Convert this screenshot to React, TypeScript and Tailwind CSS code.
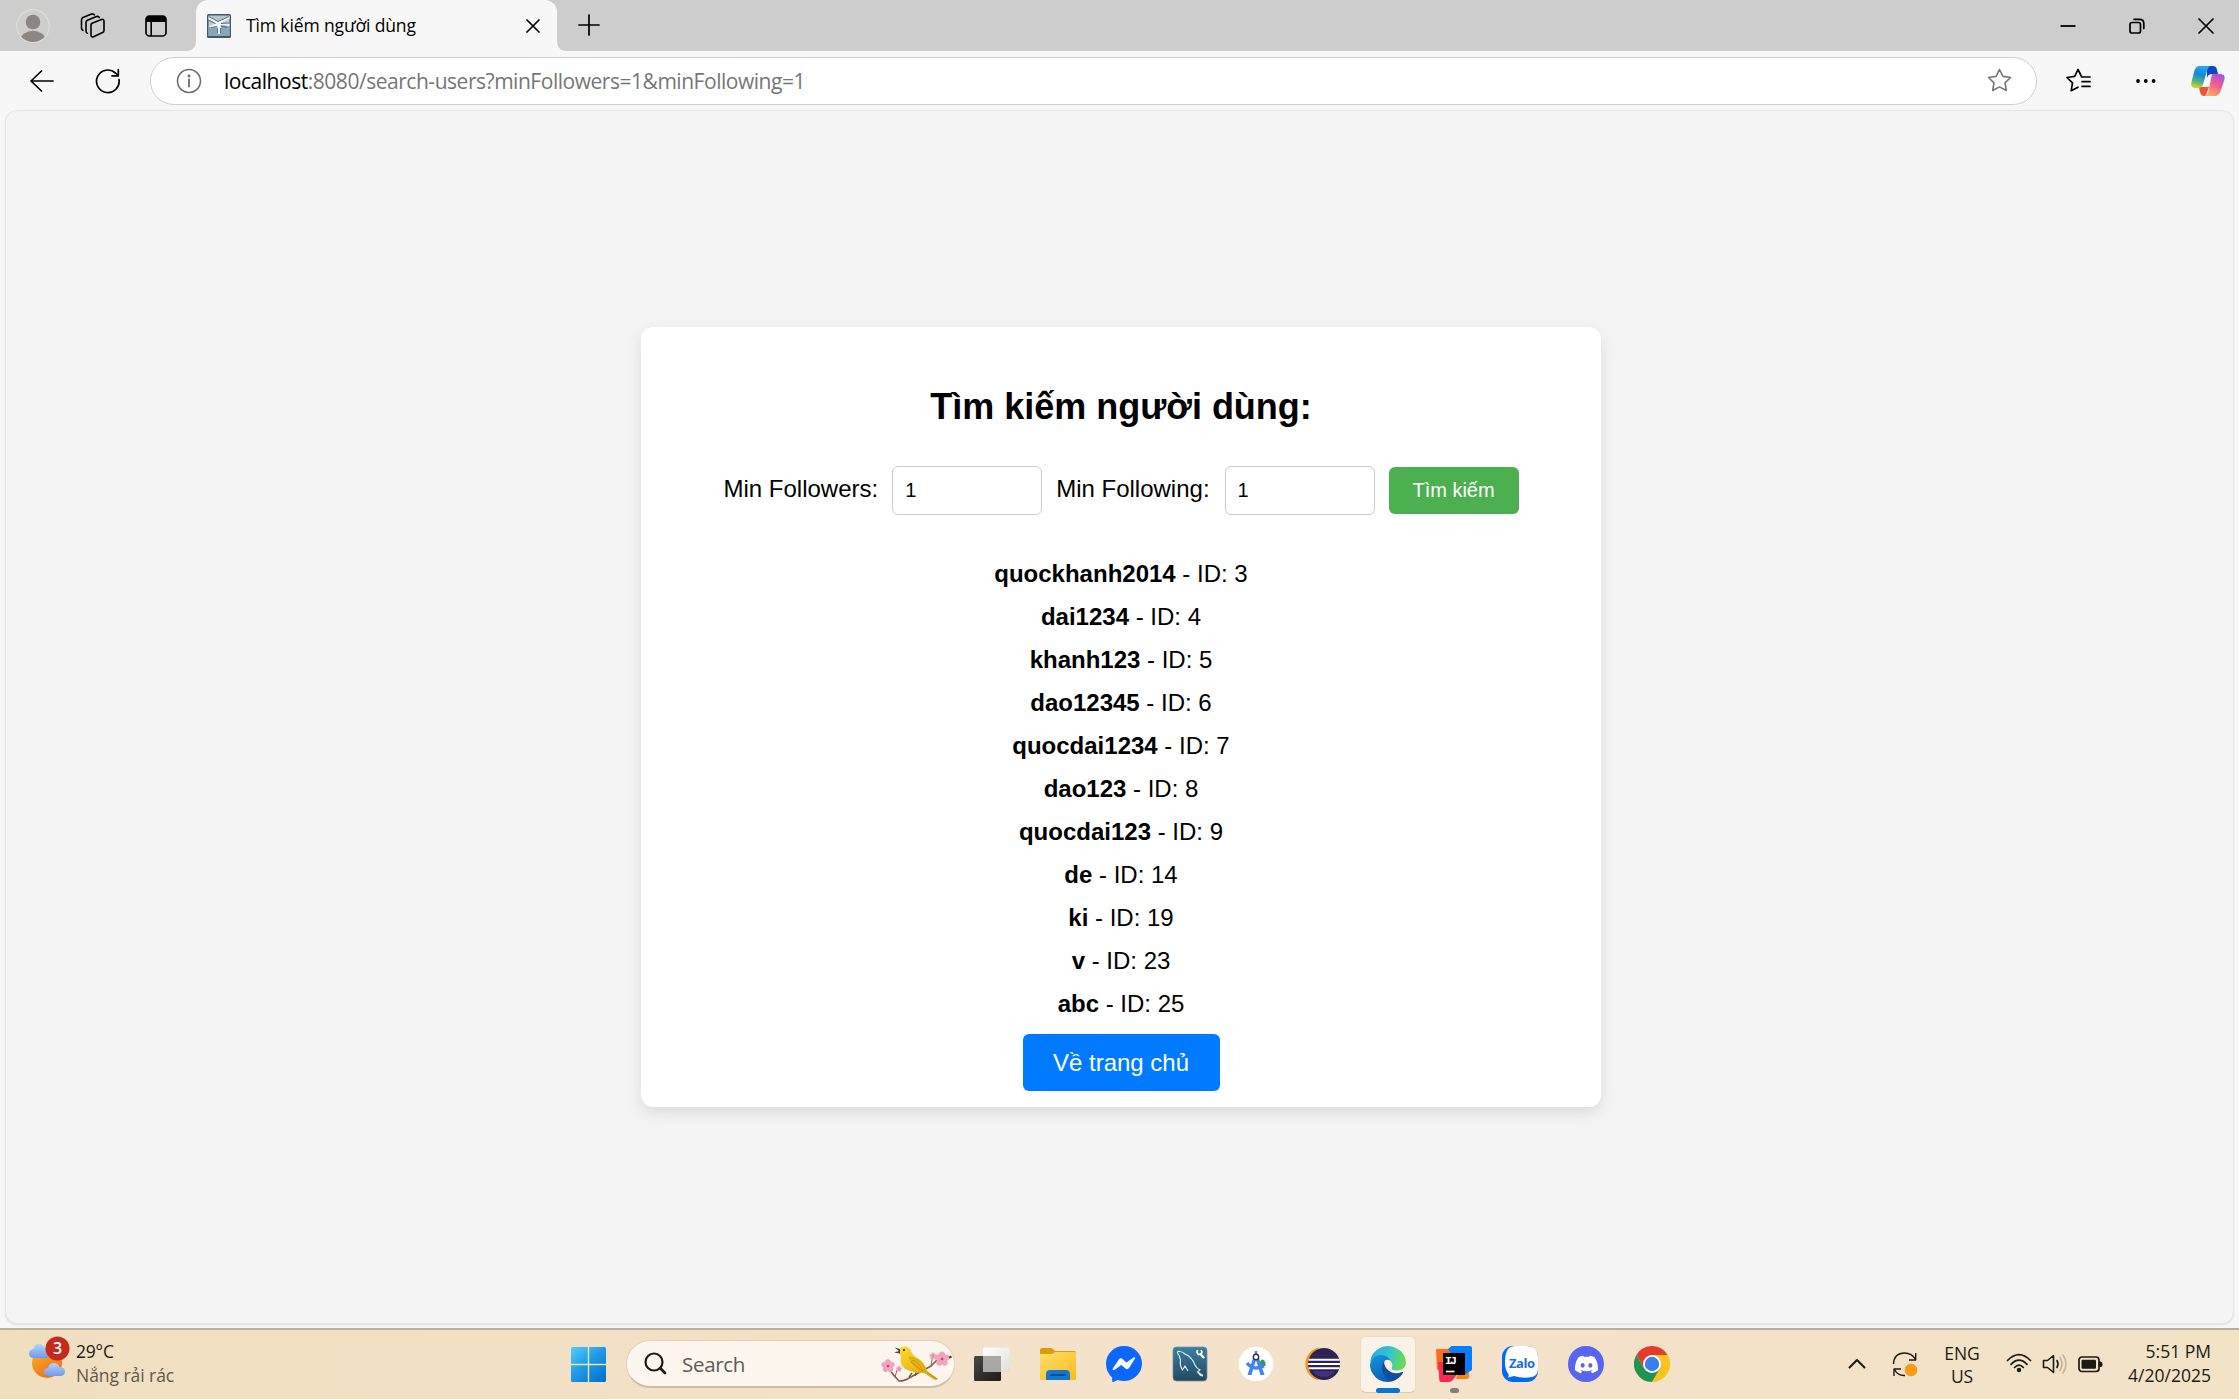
import React from "react";
import { SiDiscord } from "react-icons/si";

const users = [
  { name: "quockhanh2014", id: 3 },
  { name: "dai1234", id: 4 },
  { name: "khanh123", id: 5 },
  { name: "dao12345", id: 6 },
  { name: "quocdai1234", id: 7 },
  { name: "dao123", id: 8 },
  { name: "quocdai123", id: 9 },
  { name: "de", id: 14 },
  { name: "ki", id: 19 },
  { name: "v", id: 23 },
  { name: "abc", id: 25 },
];

const line = { fill: "none", stroke: "currentColor", strokeLinecap: "round", strokeLinejoin: "round" } as const;

function TabStrip() {
  return (
    <div className="flex h-[51px] shrink-0 bg-[#cdcdcd]">
      <div className="flex w-[186px] items-center pl-4">
        <svg className="h-[34px] w-[34px]" viewBox="0 0 34 34">
          <defs><clipPath id="av"><circle cx="17" cy="17" r="16" /></clipPath></defs>
          <circle cx="17" cy="17" r="16.3" fill="#d0cecb" stroke="#dedcd9" strokeWidth="1.2" />
          <g clipPath="url(#av)" fill="#8b8683">
            <circle cx="17" cy="13" r="7.3" />
            <ellipse cx="17" cy="31" rx="12.5" ry="9.3" />
          </g>
        </svg>
        <svg className="ml-[30px] h-[26px] w-[26px]" viewBox="0 0 26 26" strokeWidth="1.6" {...line}>
          <path d="M12 10.2 21.5 6.6Q24 5.800 24 8.300V17.500Q24 19 22.600 19.600L13.500 23.700Q11 24.500 11 22V12Q11 10.700 12 10.200Z" />
          <path d="M7.400 20.300Q6 20 6 18V9.500Q6 8 7.400 7.300L16.500 3.600Q18.500 3 19.300 4.500" />
          <path d="M2.800 17.300Q1.500 16.500 1.500 15V7Q1.500 5.300 3 4.500L11.500 1.100Q13.500 .600 14.300 1.800" />
        </svg>
        <svg className="ml-[39px] h-[22px] w-[22px]" viewBox="0 0 22 22">
          <rect x="1" y="1" width="20" height="20" rx="3.500" fill="none" stroke="#000" strokeWidth="1.700" />
          <path d="M1 7V4Q1 1 4 1H18Q21 1 21 4V7Z" />
          <path d="M6.200 7V21" stroke="#000" strokeWidth="1.600" />
        </svg>
      </div>
      <svg className="h-[51px] w-[10px]" viewBox="0 0 10 51"><path d="M0 51Q10 51 10 40V51Z" fill="#f7f7f7" /></svg>
      <div className="flex w-[361px] items-center rounded-t-[12px] bg-[#f7f7f7] pl-[11px]">
        <svg className="h-6 w-6" viewBox="0 0 24 24">
          <rect width="24" height="24" rx="1.500" fill="#44586c" />
          <rect x="1.500" y="1.500" width="21" height="20.500" fill="#b3c6d2" />
          <path d="M1.500 12Q8 15 13 12T22.500 12V22H1.500Z" fill="#88a7b8" />
          <path d="M1.500 2 11 7.500 22.500 2V5L14 9 22.500 9.500V12L13.500 11 14 13 13 20 10 20 10.500 12.500 4 13.500 1.500 12 9 9.500 1.500 5.500Z" fill="#f1f5f7" />
          <path d="M1.500 2.500 11 7.500 22 2.500M1.500 6 8.500 9.500M14 9.500 22.500 9M4 13.500 10 12.500M14 12 20 13.500M10.500 14V19.500M13.500 14V19" fill="none" stroke="#4c6377" strokeWidth=".9" />
        </svg>
        <span className="-mt-px ml-[15px] w-[172px] whitespace-nowrap text-[17.500px] leading-6 tracking-[-0.120px]">Tìm kiếm người dùng</span>
        <svg className="ml-[108px] h-[14px] w-[14px]" viewBox="0 0 14 14" strokeWidth="1.700" {...line}><path d="M1 1 13 13M13 1 1 13" /></svg>
      </div>
      <svg className="h-[51px] w-[10px]" viewBox="0 0 10 51"><path d="M10 51Q0 51 0 40V51Z" fill="#f7f7f7" /></svg>
      <svg className="mt-[14px] ml-[11px] h-[22px] w-[22px]" viewBox="0 0 22 22" strokeWidth="1.700" {...line}><path d="M11 1V21M1 11H21" /></svg>
      <div className="ml-auto flex items-center pr-[25px]">
        <svg className="h-4 w-4" viewBox="0 0 16 16"><path d="M.500 8H15.500" stroke="#000" strokeWidth="1.800" /></svg>
        <svg className="ml-[53px] h-4 w-4" viewBox="0 0 16 16" strokeWidth="1.700" {...line}>
          <rect x="1" y="4.500" width="10.500" height="10.500" rx="2" /><path d="M5 1.300H10.500Q14.800 1.300 14.800 5.500V10.500" />
        </svg>
        <svg className="ml-[53px] h-4 w-4" viewBox="0 0 16 16" strokeWidth="1.700" {...line}><path d="M1 1 15 15M15 1 1 15" /></svg>
      </div>
    </div>
  );
}

function Toolbar() {
  return (
    <div className="flex h-[59px] shrink-0 items-center bg-[#f7f7f7] pl-[30px]">
      <svg className="h-6 w-6" viewBox="0 0 24 24" strokeWidth="1.700" {...line}><path d="M23 12H1M11.500 2 1 12 11.500 22" /></svg>
      <svg className="ml-[41px] h-[26px] w-[26px]" viewBox="0 0 26 26" strokeWidth="1.700" {...line}>
        <path d="M24 11.500A11.300 11.300 0 1 1 20.500 5L23 7.500M23.300 1.500V7.800H17" />
      </svg>
      <div className="ml-[29px] flex h-[48px] w-[1887px] items-center rounded-full border-[1.500px] border-[#d0d0d0] bg-white pl-[25px]">
        <svg className="h-[26px] w-[26px] text-[#6b6b6b]" viewBox="0 0 26 26" strokeWidth="1.500" {...line}>
          <circle cx="13" cy="13" r="11.500" /><path d="M13 11.500V18.500" strokeWidth="1.800" /><circle cx="13" cy="8" r=".7" fill="currentColor" />
        </svg>
        <span className="ml-[22px] whitespace-nowrap text-[21px] leading-7 tracking-[-0.470px] text-[#767676]"><span className="text-black">localhost</span>:8080/search-users?minFollowers=1&amp;minFollowing=1</span>
        <svg className="mr-[24px] ml-auto h-[25px] w-[25px] text-[#767676]" viewBox="0 0 25 25" strokeWidth="1.600" {...line}>
          <path d="M12.500 1.500 15.900 8.400 23.500 9.500 18 14.900 19.300 22.500 12.500 18.900 5.700 22.500 7 14.900 1.500 9.500 9.100 8.400Z" />
        </svg>
      </div>
      <svg className="ml-[29px] h-[25px] w-[25px]" viewBox="0 0 25 25" strokeWidth="1.700" {...line}>
        <path d="M16.500 9H15.700L12 1.500 8.700 8.400 1 9.500 6.500 14.900 5.200 22.700 12 19.200M16.500 9H24M16 13.700H24M16 18.400H24" />
      </svg>
      <svg className="ml-[44px] h-[6px] w-[22px]" viewBox="0 0 22 6"><circle cx="3" cy="3" r="1.900" /><circle cx="10.800" cy="3" r="1.900" /><circle cx="18.600" cy="3" r="1.900" /></svg>
      <svg className="ml-[33px] h-[34px] w-[36px]" viewBox="0 0 36 34">
        <defs>
          <linearGradient id="cpa" x1=".4" y1="0" x2=".2" y2="1"><stop offset="0" stopColor="#20a8f0" /><stop offset=".35" stopColor="#1787dc" /><stop offset=".7" stopColor="#4fb67b" /><stop offset="1" stopColor="#f8cf20" /></linearGradient>
          <linearGradient id="cpb" x1=".8" y1="0" x2=".3" y2="1"><stop offset="0" stopColor="#a350e8" /><stop offset=".5" stopColor="#f0608c" /><stop offset="1" stopColor="#ffac5c" /></linearGradient>
        </defs>
        <path d="M17 2H23Q26 2 26.800 5L28 10H22Q18 10 17 14Z" fill="#0c49c3" />
        <path d="M9 23H19L16 31Q15.500 32 14 32 11 32 10 28Z" fill="#f4503c" />
        <path d="M9 2H20Q18 3 17 7L13.500 19Q12.400 24 8 24H5Q0 24 1.500 18L4 8Q5.500 2 9 2Z" fill="url(#cpa)" />
        <path d="M22 10H30Q36 10 34.300 16L31 26Q29 32 25 32H15Q17.500 31 18.500 27Z" fill="url(#cpb)" />
        <path d="M21.500 11Q18.500 11 17.800 13.500L15 22.500H15.500Q18 22.500 18.800 20Z" fill="#fff" />
      </svg>
    </div>
  );
}

function NumberBox() {
  return <input type="text" defaultValue="1" className="h-[49px] w-[150px] rounded-[6px] border border-[#ccc] bg-white px-3 text-[20px] leading-6 outline-none" />;
}

function SearchPage() {
  return (
    <div className="flex grow flex-col bg-[#f7f7f7] px-[5px] pb-[4px]">
      <main className="flex grow items-start justify-center rounded-[12px] border border-[#e6e6e6] bg-[#f4f4f4] pt-[216px] pl-[3px] font-['Liberation_Sans',Arial,sans-serif] text-[24px] leading-[28px] shadow-[0_1px_2px_rgba(0,0,0,0.100)]">
        <section className="flex h-[780px] w-[960px] flex-col items-center rounded-[12px] bg-white pt-[60px] shadow-[0_6px_15px_rgba(0,0,0,0.100)]">
          <h2 className="text-[36px] leading-[40px] font-bold">Tìm kiếm người dùng:</h2>
          <form className="mt-[39px] flex items-center" onSubmit={(e) => e.preventDefault()}>
            <label className="mr-[14px] -mt-[4px]">Min Followers:</label>
            <NumberBox />
            <label className="mr-[15px] ml-[14px] -mt-[4px]">Min Following:</label>
            <NumberBox />
            <button className="ml-[14px] h-[47px] w-[130px] rounded-[6px] bg-[#4caf50] pb-[2px] text-[20px] leading-6 text-white">Tìm kiếm</button>
          </form>
          <ul className="mt-[38px] flex flex-col items-center">
            {users.map((u) => (
              <li key={u.id} className="h-[43px] pt-[7px]"><b>{u.name}</b> - ID: {u.id}</li>
            ))}
          </ul>
          <button className="mt-[8px] h-[57px] w-[197px] rounded-[6px] bg-[#007bff] text-white">Về trang chủ</button>
        </section>
      </main>
    </div>
  );
}

function Weather() {
  return (
    <svg className="h-[44px] w-[44px]" viewBox="0 0 44 44">
      <defs>
        <linearGradient id="sun" x1="0" y1="0" x2=".6" y2="1"><stop offset="0" stopColor="#f8b42a" /><stop offset="1" stopColor="#f0701c" /></linearGradient>
        <linearGradient id="cl" x1="0" y1="0" x2="0" y2="1"><stop offset="0" stopColor="#b5d2f8" /><stop offset="1" stopColor="#6e9bea" /></linearGradient>
      </defs>
      <circle cx="19" cy="27" r="15" fill="url(#sun)" />
      <path d="M6.500 22Q1 22 1 17.500 1 13.500 5.500 13 6 8 11 8 15.500 8 17 12 23 12 23 17 23 22 18 22Z" fill="url(#cl)" />
      <path d="M21 40Q16 40 16 36 16 32.500 20 32 21 27 26 27 30 27 31.500 31 37 31 37 35.500 37 40 32 40Z" fill="url(#cl)" />
      <circle cx="29.500" cy="12.500" r="12" fill="#c42b1c" />
      <text x="29.500" y="18.300" textAnchor="middle" fontSize="16" fontWeight="600" fill="#fff" fontFamily="Open Sans">3</text>
    </svg>
  );
}

function Blossom({ x, y, s }: { x: number; y: number; s: number }) {
  return (
    <g transform={`translate(${x} ${y}) scale(${s})`}>
      {[0, 72, 144, 216, 288].map((a) => <ellipse key={a} cx="0" cy="-3.600" rx="2.900" ry="3.400" fill="#f3a5bd" stroke="#ea93b0" strokeWidth=".3" transform={`rotate(${a})`} />)}
      <circle r="1.300" fill="#cf3c68" />
    </g>
  );
}

function Bird() {
  return (
    <svg className="h-[38px] w-[72px]" viewBox="0 0 72 38">
      <defs><linearGradient id="bd" x1="0" y1="0" x2="1" y2="1"><stop offset="0" stopColor="#fbdc2c" /><stop offset="1" stopColor="#e09a0c" /></linearGradient></defs>
      <path d="M8 24Q13 31 18 36 24 36 29 32.500L50 21 56 15 70 12" fill="none" stroke="#8e5a44" strokeWidth="1.600" />
      <path d="M14 32 16 25M50 20 52 10" stroke="#8e5a44" strokeWidth=".9" />
      <path d="M66 13.500 70.500 11.500" stroke="#4d3a28" strokeWidth="2.200" />
      <path d="M18 8Q17 2 23 1.500 29 1 30.500 7 32 11 38 14 44 18 46 26L57 34 54 35 43 28Q32 28 24 24 18 19 20 12Z" fill="url(#bd)" />
      <path d="M28 12Q37 13 41 19 44 24 44 27 33 24 28 12" fill="#eab313" stroke="#b98a10" strokeWidth=".4" />
      <path d="M31 15Q38 17 42 26M30 17Q35 20 41 26M46 27 56 34" fill="none" stroke="#9a7410" strokeWidth=".5" />
      <path d="M19 4 13.500 2.500 18 6 13 7.500 19 8.500Z" fill="#4b4740" />
      <circle cx="23" cy="5" r="1.100" fill="#222" />
      <path d="M31 28 28 32M35 27.500 34 31" stroke="#7b5528" strokeWidth="1.300" />
      <Blossom x={7} y={21} s={0.95} /><Blossom x={61} y={14} s={1.05} /><Blossom x={18} y={24} s={0.42} /><Blossom x={52} y={11} s={0.5} />
    </svg>
  );
}

const box = "h-9 w-9 shrink-0";

function TaskView() {
  return (
    <svg className={box} viewBox="0 0 36 36">
      <defs><linearGradient id="tv" x1="0" y1="0" x2="1" y2="1"><stop offset="0" stopColor="#4a4845" /><stop offset="1" stopColor="#1d1b19" /></linearGradient><linearGradient id="tw" x1="0" y1="0" x2="1" y2="1"><stop offset="0" stopColor="#fff" /><stop offset="1" stopColor="#dedede" /></linearGradient></defs>
      <rect y="10" width="27" height="25" rx="1.500" fill="url(#tv)" />
      <rect x="9" y="1.500" width="27" height="24.500" rx="1.500" fill="url(#tw)" />
      <path d="M9 10H27V26H10.500Q9 26 9 24.500Z" fill="#aaa7a4" />
    </svg>
  );
}

function Folder() {
  return (
    <svg className={box} viewBox="0 0 36 36">
      <defs><linearGradient id="fo" x1="0" y1="0" x2="1" y2="1"><stop offset="0" stopColor="#ffdd6b" /><stop offset="1" stopColor="#fbbd1c" /></linearGradient></defs>
      <path d="M0 4Q0 2 2 2H10.500Q12 2 13 3L15 5H34.500Q36 5 36 7V15H0Z" fill="#dc9c0c" />
      <path d="M0 8H11Q13 8 15 6H34.500Q36 6 36 7.500V32.500Q36 34 34.500 34H1.500Q0 34 0 32.500Z" fill="url(#fo)" />
      <path d="M6 34V28Q6 24 10 24H26Q30 24 30 28V34Z" fill="#1079cf" />
      <path d="M11 29H25" stroke="#0a4b8c" strokeWidth="1.800" strokeLinecap="round" />
    </svg>
  );
}

function Messenger() {
  return (
    <svg className={box} viewBox="0 0 36 36">
      <path d="M18 0A18 17.500 0 0 1 36 17.500 18 17.500 0 0 1 18 35Q14.500 35 11.500 34L7.500 35.900Q6.300 36.200 6.200 35L6.100 31.500Q0 26 0 17.500A18 17.500 0 0 1 18 0Z" fill="#0a68ff" />
      <path d="M6.500 23 13 13.200Q14.500 11.500 16.300 12.700L20.500 16.500 27.500 11.500Q29.500 10.700 29 12.500L23 22Q21.500 24 19.500 22.500L15.200 19 8 24.200Q6.500 24.700 6.500 23Z" fill="#fff" />
    </svg>
  );
}

function Workbench() {
  return (
    <svg className={box} viewBox="0 0 36 36">
      <defs><linearGradient id="wb" x1="0" y1="0" x2="0" y2="1"><stop offset="0" stopColor="#3b7ea6" /><stop offset="1" stopColor="#22495f" /></linearGradient></defs>
      <rect x="1" y="1" width="34" height="34" rx="3.500" fill="url(#wb)" stroke="#7793a0" strokeWidth=".8" />
      <path d="M5.500 7Q5 4.800 8 5.500 10 5.500 13 8 20 11 23 19 24.500 22.500 28 24L25.500 26 31 29.500M5.500 7Q8 10 8.500 14 7.500 19 10.500 24L13 20 16 25M25.500 26 28.500 29.500 31 30" fill="none" stroke="#e8f1f5" strokeWidth="1.100" />
      <path d="M28 7.500 32 12" fill="none" stroke="#fff" strokeWidth="2.200" />
      <path d="M25.500 4 25 6.500 26.500 8.500 29 8 30 6 29 4" fill="none" stroke="#fff" strokeWidth="1.600" />
    </svg>
  );
}

function AndroidStudio() {
  return (
    <svg className={box} viewBox="0 0 36 36">
      <circle cx="18" cy="18" r="16" fill="#fff" stroke="#fff" strokeWidth="2.500" strokeDasharray="6 2.400" strokeLinecap="round" />
      <path d="M22 17Q22 13.500 25 13.500 28 15 27.500 20H22Z" fill="#30a04c" />
      <path d="M16 9H20L26.500 29H22.500L18 14 13.500 29H9.500Z" fill="#4284f4" />
      <path d="M9 17Q15 25 26 20" fill="none" stroke="#4284f4" strokeWidth="3.400" />
      <path d="M18 5V8" stroke="#4284f4" strokeWidth="2.500" />
      <circle cx="18" cy="11" r="2.700" fill="#fff" stroke="#30353a" strokeWidth="1.400" />
    </svg>
  );
}

function Eclipse() {
  return (
    <svg className={box} viewBox="0 0 36 36">
      <path d="M16 1.500A16.500 16.500 0 0 0 16 34.300 19 19 0 0 1 16 1.500Z" fill="#f7941e" />
      <circle cx="20" cy="18" r="16" fill="#2c2255" />
      <path d="M9 25H31Q27 31 20 31 13 31 9 25Z" fill="#413181" />
      <path d="M4.500 13.700H35.500M4 18H36M4.500 22.300H35.500" stroke="#fff" strokeWidth="1.900" />
    </svg>
  );
}

function Edge() {
  return (
    <svg className={box} viewBox="0 0 36 36">
      <defs>
        <linearGradient id="e1" x1="0" y1=".3" x2="1" y2=".5"><stop offset="0" stopColor="#28a8e0" /><stop offset=".5" stopColor="#33c3d0" /><stop offset="1" stopColor="#6ade4e" /></linearGradient>
        <linearGradient id="e2" x1="0" y1="0" x2=".5" y2="1"><stop offset="0" stopColor="#1494df" /><stop offset="1" stopColor="#0d5cb5" /></linearGradient>
      </defs>
      <path d="M0 17Q1 6 10 2 18-2 26 2 36 7 36 17 35.500 24 28 24.500 21 24.700 21.500 22 23.500 19 21 16 18 12 12 11 4 10 0 17Z" fill="url(#e1)" />
      <path d="M0 18Q3 9 11 9 18 9.500 20.500 15 16 13 14 17 12 24 19 29 25 31 31 28 26 36 18 36 8 36 3 28 0 24 0 18Z" fill="url(#e2)" />
      <path d="M14.500 15Q11 19 12 24 14 32 22 35 29 33.500 33 27 33.500 25.500 32 26 25 29 19 25 14 21 14.500 15Z" fill="#124f9e" />
      <path d="M14.500 15Q17 13 20 14.500 22.500 17 22 20 20.500 22.500 22 23.700 18.500 24 16 21 13.500 18 14.500 15Z" fill="#faf2e8" />
    </svg>
  );
}

function Idea() {
  return (
    <svg className={box} viewBox="0 0 36 36">
      <path d="M0 3H14V15L9 30 1 23Z" fill="#fb6d22" />
      <path d="M22 26H33V31Q33 33 31 33H20Z" fill="#fc8012" />
      <path d="M2 16H14L22 27 17 34Q15.500 36 13 36H5Q3.500 36 3.300 34Z" fill="#fe2857" />
      <path d="M12 3 15.500 0H34Q36 0 36 2V24L28 29Z" fill="#087cfa" />
      <rect x="7" y="7" width="22" height="22" />
      <text x="9" y="18" fontSize="11.500" fontWeight="700" fill="#fff" fontFamily="Liberation Mono" textLength="12">IJ</text>
      <path d="M10 25.500H18.500" stroke="#fff" strokeWidth="1.700" />
    </svg>
  );
}

function Zalo() {
  return (
    <svg className={box} viewBox="0 0 36 36">
      <rect width="36" height="36" rx="11" fill="#0068ff" />
      <path d="M6 3Q9 0 14 0H24Q36 0 36 12V22Q36 30 30 31 21 33 12 30L6 31.500Q7 29.500 6.500 28 3 24 3 17 3 7 6 3Z" fill="#fff" />
      <text x="7" y="21.500" fontSize="13" fontWeight="700" fill="#1b6de5" fontFamily="Open Sans" textLength="26">Zalo</text>
    </svg>
  );
}

function Chrome() {
  return (
    <svg className={box} viewBox="0 0 36 36">
      <path d="M2.410 9A18 18 0 0 1 33.600 9H18L10.200 22.500Z" fill="#e33b2e" />
      <path d="M33.600 9A18 18 0 0 1 18 36L25.800 22.500 18 9Z" fill="#fcc31e" />
      <path d="M18 36A18 18 0 0 1 2.410 9L10.200 22.500 25.800 22.500Z" fill="#209350" />
      <circle cx="18" cy="18" r="9" fill="#fff" /><circle cx="18" cy="18" r="7.200" fill="#3b7eed" />
    </svg>
  );
}

function Taskbar() {
  return (
    <div className="flex h-[71px] shrink-0 border-t-2 border-[#bbb09e] bg-linear-to-r from-[#f0dfbf] via-[#f4e2cb] to-[#f2e2c6] text-[17.500px] leading-[24px] text-[#1c1a16]">
      <div className="flex w-[571px] pt-[6px] pl-[28px]">
        <Weather />
        <div className="ml-[4px] pt-[3px]">
          <div className="tracking-[-0.200px]">29°C</div>
          <div className="tracking-[-0.050px] text-[#5f594b]">Nắng rải rác</div>
        </div>
      </div>
      <svg className="mt-[17px] h-[35px] w-[35px]" viewBox="0 0 35 35">
        <defs><linearGradient id="win" gradientUnits="userSpaceOnUse" x1="0" y1="0" x2="30" y2="35"><stop offset="0" stopColor="#4fcffb" /><stop offset=".5" stopColor="#1e9ae6" /><stop offset="1" stopColor="#0573d0" /></linearGradient></defs>
        <path d="M1.500 0H16.800V16.800H0V1.500Q0 0 1.500 0ZM18.200 0H33.500Q35 0 35 1.500V16.800H18.200ZM0 18.200H16.800V35H1.500Q0 35 0 33.500ZM18.200 18.200H35V33.500Q35 35 33.500 35H18.200Z" fill="url(#win)" />
      </svg>
      <div className="mt-[10px] ml-[20px] flex h-[48px] w-[329px] items-center rounded-full border-[1.500px] border-b-2 border-[#e3d3bc] border-b-[#cdbda5] bg-[#fcf6ef] pl-[17px]">
        <svg className="h-[23px] w-[23px]" viewBox="0 0 23 23" strokeWidth="2.200" {...line}><circle cx="10" cy="10" r="8.500" /><path d="M16.300 16.300 21 21" strokeWidth="2.800" /></svg>
        <span className="ml-[15px] text-[20.500px] tracking-[-0.300px] text-[#5f5b55]">Search</span>
        <div className="mr-px ml-auto"><Bird /></div>
      </div>
      <div className="flex gap-[30px] pt-[16px] pl-[19px]">
        <TaskView /><Folder /><Messenger /><Workbench /><AndroidStudio /><Eclipse />
        <div className="-mx-[10px] -mt-[10px] flex h-[57px] w-[56px] flex-col items-center rounded-[6px] border border-[#eddcc4] border-b-[#dccbb3] bg-[#faf2e8] pt-[9px]">
          <Edge /><div className="mt-[6px] h-[5px] w-6 shrink-0 rounded-full bg-[#0078d4]" />
        </div>
        <div className="flex flex-col items-center"><Idea /><div className="mt-[6px] h-[5px] w-[9px] rounded-full bg-[#8a7f72]" /></div>
        <Zalo />
        <div className="flex h-9 w-9 items-center justify-center rounded-full bg-[#5865f2]"><SiDiscord className="h-[23px] w-[23px] text-white" /></div>
        <Chrome />
      </div>
      <div className="ml-auto flex pr-[28px]">
        <svg className="mt-[28px] h-[11px] w-[18px]" viewBox="0 0 18 11" strokeWidth="2" {...line}><path d="M1.500 9.500 9 2 16.500 9.500" /></svg>
        <svg className="mt-[21px] ml-[26px] h-[26px] w-[26px]" viewBox="0 0 26 26" strokeWidth="1.400" {...line} strokeLinecap="butt">
          <path d="M1.500 13Q2 2 12.500 2 20 2 23.500 8.500M23.700 2V9H17M2 25V18H9M2.500 18.500Q6 25 13 24.500" />
          <circle cx="19" cy="19" r="6" fill="#ff9a0c" stroke="#d68a24" strokeWidth=".5" />
        </svg>
        <div className="mt-[12px] ml-[24px] w-[40px] text-center leading-[23px] tracking-[-0.100px]"><div>ENG</div><div>US</div></div>
        <svg className="mt-[23px] ml-[24px] h-[20px] w-[26px]" viewBox="0 0 26 20" strokeWidth="1.700" {...line}>
          <path d="M1.500 7.500Q13-4 24.500 7.500M5 11.300Q13 3 21 11.300M8.600 14.500Q13 9.800 17.400 14.500" /><circle cx="13" cy="17" r="1.400" fill="currentColor" />
        </svg>
        <svg className="mt-[23px] ml-[10px] h-[22px] w-[26px]" viewBox="0 0 26 22" strokeWidth="1.600" {...line}>
          <path d="M1.500 7.500H5.500L11.500 2.500V19.500L5.500 14.500H1.500Z" /><path d="M15 7.500Q17 11 15 14.500" />
          <path d="M18 4.500Q22 11 18 17.500M21 2Q27 11 21 20" stroke="#c2b49c" />
        </svg>
        <svg className="mt-[26px] ml-[10px] h-[17px] w-[25px]" viewBox="0 0 25 17">
          <rect x="1" y="1" width="20" height="14.500" rx="3" fill="none" stroke="#1c1a16" strokeWidth="1.700" /><rect x="3.500" y="3.700" width="14.500" height="9" rx="1" fill="#1c1a16" /><path d="M21 5.500H22.500Q24.500 5.500 24.500 8.200 24.500 11 22.500 11H21Z" fill="#1c1a16" />
        </svg>
        <div className="mt-[9px] w-[108px] text-right"><div>5:51 PM</div><div>4/20/2025</div></div>
      </div>
    </div>
  );
}

export default function App() {
  return (
    <div className="flex h-[1399px] w-[2239px] flex-col overflow-hidden bg-[#f7f7f7] font-['Open_Sans','Noto_Sans',sans-serif] text-black">
      <TabStrip />
      <Toolbar />
      <SearchPage />
      <Taskbar />
    </div>
  );
}
